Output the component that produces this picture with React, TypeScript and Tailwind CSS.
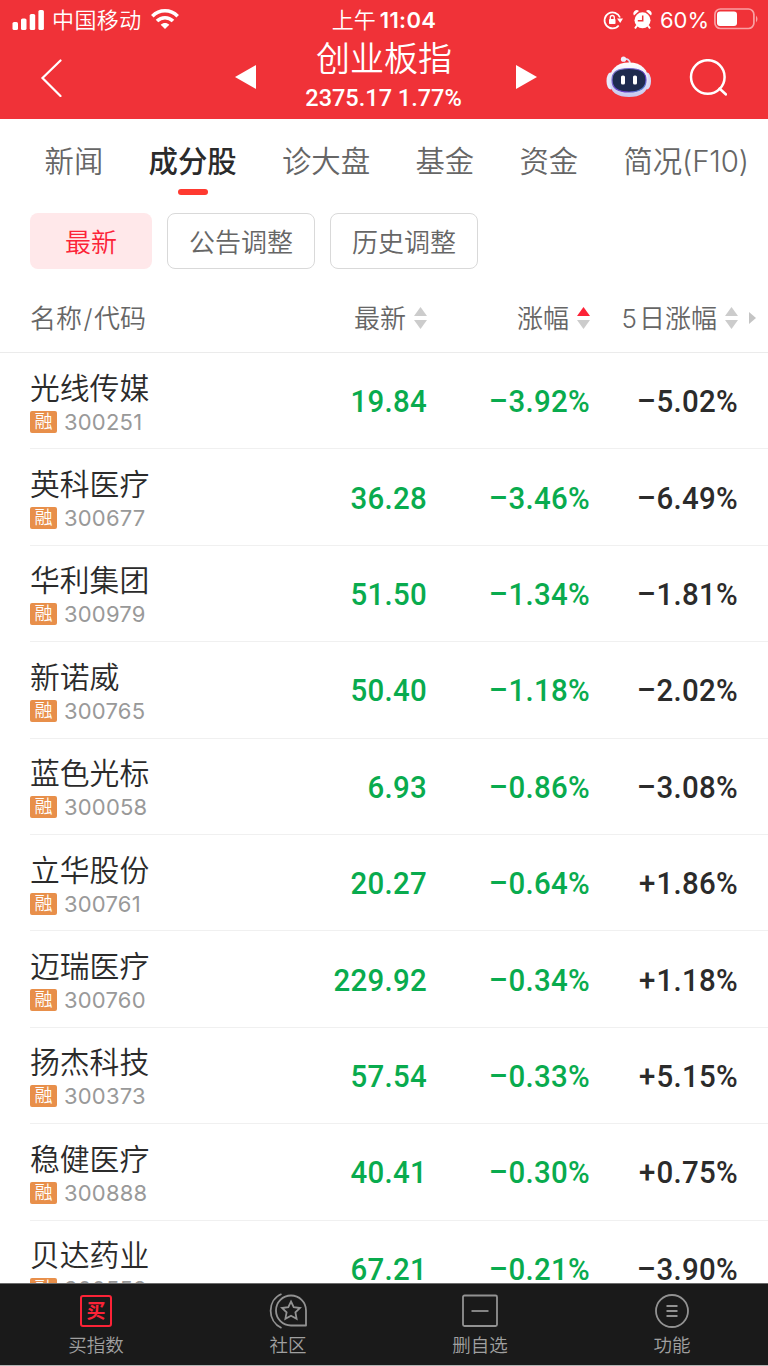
import clsx from "clsx"

const stocks = [
    { name: '光线传媒', code: '300251', price: '19.84', change: '−3.92%', five: '−5.02%' },
    { name: '英科医疗', code: '300677', price: '36.28', change: '−3.46%', five: '−6.49%' },
    { name: '华利集团', code: '300979', price: '51.50', change: '−1.34%', five: '−1.81%' },
    { name: '新诺威', code: '300765', price: '50.40', change: '−1.18%', five: '−2.02%' },
    { name: '蓝色光标', code: '300058', price: '6.93', change: '−0.86%', five: '−3.08%' },
    { name: '立华股份', code: '300761', price: '20.27', change: '−0.64%', five: '+1.86%' },
    { name: '迈瑞医疗', code: '300760', price: '229.92', change: '−0.34%', five: '+1.18%' },
    { name: '扬杰科技', code: '300373', price: '57.54', change: '−0.33%', five: '+5.15%' },
    { name: '稳健医疗', code: '300888', price: '40.41', change: '−0.30%', five: '+0.75%' },
    { name: '贝达药业', code: '300558', price: '67.21', change: '−0.21%', five: '−3.90%' },
]

const tabs = ['新闻', '成分股', '诊大盘', '基金', '资金', '简况(F10)']

function StatusBar() {
    return (
        <div className="grid h-10 grid-cols-3 items-center text-[22px] leading-none">
            <div className="flex items-center pl-3">
                <svg width="32" height="20" viewBox="0 0 32 20" fill="white">
                    <rect x="0.5" y="12" width="5.5" height="8" rx="1.6" />
                    <rect x="9" y="8.500" width="5.500" height="11.500" rx="1.6" />
                    <rect x="17.700" y="4" width="5.500" height="16" rx="1.6" />
                    <rect x="26.400" y="0" width="5.500" height="20" rx="1.6" />
                </svg>
                <span className="ml-2 tracking-[0.4px]">中国移动</span>
                <svg className="-mt-[3px] ml-[9px]" width="28" height="20" viewBox="0 0 28 20" fill="none" stroke="white" strokeWidth="3.600">
                    <path d="M1.300 7.200C8.500 0 19.500 0 26.700 7.200" />
                    <path d="M6 12C10.500 7.600 17.500 7.600 22 12" />
                    <path d="M14 20L9.700 15.700C12.200 13.300 15.800 13.300 18.300 15.700Z" fill="white" stroke="none" />
                </svg>
            </div>
            <div className="text-center">上午<span className="ml-1 font-semibold tracking-[0.3px]">11:04</span></div>
            <div className="flex items-center justify-end pr-2">
                <svg width="20" height="20" viewBox="0 0 20 20" fill="none" stroke="white" strokeWidth="1.700">
                    <path d="M15.700 15.500A8 8 0 1 1 17 7.500" />
                    <path d="M14 8.500H20L17.200 13Z" fill="white" stroke="none" />
                    <rect x="6" y="9" width="6.500" height="5" rx="0.800" fill="white" stroke="none" />
                    <path d="M7.300 9.500V7.500a2 2 0 0 1 4 0V9.500" strokeWidth="1.300" />
                </svg>
                <svg className="ml-[10px]" width="19" height="20" viewBox="0 0 18 20" fill="white">
                    <path d="M0.500 5.500A3.400 3.400 0 0 1 5.500 1ZM12.500 1A3.400 3.400 0 0 1 17.500 5.500Z" />
                    <circle cx="9" cy="10.300" r="8" />
                    <path d="M3.500 15.500L1.500 18.500M14.500 15.500L16.500 18.500" stroke="white" strokeWidth="2" />
                    <path d="M9.200 5.500V10.700H4.300" fill="none" stroke="#f03238" strokeWidth="1.500" />
                </svg>
                <span className="ml-2 font-normal">60%</span>
                <svg className="-mt-0.5 ml-[5px]" width="46" height="22" viewBox="0 0 46 22">
                    <rect x="0.900" y="1" width="39" height="19.500" rx="5.500" fill="none" stroke="#f9a0a3" strokeWidth="1.700" />
                    <rect x="3" y="3.500" width="20" height="14.500" rx="3" fill="white" />
                    <path d="M42 7.500q3 3.500 0 7z" fill="#f9a0a3" />
                </svg>
            </div>
        </div>
    )
}

function Robot() {
    return (
        <svg width="46" height="42" viewBox="0 0 46 42">
            <defs>
                <linearGradient id="shell" x1="0" y1="0" x2="0" y2="1">
                    <stop offset="0" stopColor="#ffffff" />
                    <stop offset="1" stopColor="#c5c8ef" />
                </linearGradient>
                <linearGradient id="rim" x1="0" y1="0" x2="1" y2="1">
                    <stop offset="0" stopColor="#8585d2" />
                    <stop offset="0.700" stopColor="#6137c8" />
                    <stop offset="1" stopColor="#54b9df" />
                </linearGradient>
            </defs>
            <path d="M17 3Q24 2 24 8" fill="none" stroke="#dedff5" strokeWidth="1.800" />
            <circle cx="17.500" cy="3.200" r="2.600" fill="#eeeefc" />
            <ellipse cx="4.500" cy="25" rx="4" ry="8.500" fill="#e9eafb" />
            <ellipse cx="41" cy="25" rx="4" ry="8.500" fill="#d6d8f5" />
            <path d="M23 6.500C36 6.500 42.500 14 42.500 25C42.500 37 34 41 23 41S3.500 37 3.500 25C3.500 14 10 6.500 23 6.500Z" fill="url(#shell)" />
            <path d="M23 12.500C35 12.500 40 16 40 24S35 36 23 36S6 32 6 24S11 12.500 23 12.500Z" fill="#1e2b4e" stroke="url(#rim)" strokeWidth="1.200" />
            <rect x="15" y="19.500" width="4" height="9" rx="1.600" fill="white" />
            <rect x="27" y="19.500" width="4" height="9" rx="1.600" fill="white" />
        </svg>
    )
}

function SortIcon({ active }: { active?: boolean }) {
    return (
        <svg className="shrink-0" width="13" height="22" viewBox="0 0 13 22">
            <path d="M6.500 0L13 9H0Z" fill={active ? '#fc2337' : '#cccccc'} />
            <path d="M0 13H13L6.500 22Z" fill="#cccccc" />
        </svg>
    )
}

function Percent({ value }: { value: string }) {
    return (
        <>
            <span className={clsx('inline-block origin-right', value[0] === '−' ? 'scale-x-[1.2]' : 'mr-px')}>{value[0]}</span>
            {value.slice(1)}
        </>
    )
}

function Header() {
    return (
        <header className="h-[119px] bg-[#f03238] text-white">
            <StatusBar />
            <div className="flex h-[76px] items-center">
                <svg className="ml-10" width="22" height="38" viewBox="0 0 22 38" fill="none" stroke="white" strokeWidth="2.200">
                    <path d="M20.500 1.500L2.500 19L20.500 37" strokeLinecap="round" />
                </svg>
                <svg className="-mt-0.5 ml-[173px]" width="22" height="24" viewBox="0 0 22 24" fill="white"><path d="M0 12L21 0V24Z" /></svg>
                <div className="flex w-[258px] flex-col items-center pr-1">
                    <h1 className="h-[38px] text-[34px] leading-[38px]">创业板指</h1>
                    <div className="mt-0.5 h-9 scale-x-[0.96] font-[Roboto] text-[24.500px] leading-9 font-medium">2375.17 1.77%</div>
                </div>
                <svg className="-mt-0.5" width="22" height="24" viewBox="0 0 22 24" fill="white"><path d="M1 0L22 12L1 24Z" /></svg>
                <div className="-mt-0.5 ml-[69px]"><Robot /></div>
                <svg className="ml-[37px]" width="38" height="38" viewBox="0 0 38 38" fill="none" stroke="white" strokeWidth="2.500">
                    <circle cx="18.800" cy="18" r="16.800" />
                    <path d="M30.500 29.500L37 35.500" strokeLinecap="round" />
                </svg>
            </div>
        </header>
    )
}

function BottomNav() {
    return (
        <nav className="grid h-[83px] shrink-0 grid-cols-4 border-t border-b border-t-[#6b6b6b] border-b-[#b5b5b5] bg-[#1a1a1a] text-[18.500px] text-[#a0a0a0]">
            <div className="flex flex-col items-center pt-2">
                <div className="flex h-[38px] items-center">
                    <div className="flex h-8 w-8 items-center justify-center rounded-[3px] border-2 border-[#fc2337] text-[19px] leading-none font-bold text-[#fc2337]">买</div>
                </div>
                <span className="leading-[30px]">买指数</span>
            </div>
            <div className="flex flex-col items-center pt-2">
                <svg width="38" height="38" viewBox="0 0 38 38" fill="none" stroke="#929292" strokeWidth="1.800">
                    <path d="M12.500 2C-2 8-2 29 12.500 36" />
                    <path d="M37 33.500H22A15 15 0 1 1 37 18.500Z" strokeLinejoin="round" />
                    <path d="M22 9.500L24.700 15.200L31 16L26.400 20.400L27.600 26.700L22 23.700L16.400 26.700L17.600 20.400L13 16L19.300 15.200Z" />
                </svg>
                <span className="leading-[30px]">社区</span>
            </div>
            <div className="flex flex-col items-center pt-2">
                <svg width="38" height="38" viewBox="0 0 38 38" fill="none" stroke="#929292" strokeWidth="1.800">
                    <rect x="2" y="3.500" width="34" height="30.500" rx="1.500" />
                    <path d="M10.500 19H27.500" />
                </svg>
                <span className="leading-[30px]">删自选</span>
            </div>
            <div className="flex flex-col items-center pt-2">
                <svg width="38" height="38" viewBox="0 0 38 38" fill="none" stroke="#929292" strokeWidth="1.800">
                    <circle cx="19" cy="19" r="16" />
                    <path d="M13.500 14H24.500M13.500 19H24.500M13.500 24H24.500" />
                </svg>
                <span className="leading-[30px]">功能</span>
            </div>
        </nav>
    )
}

export default function App() {
    return (
        <div className="flex h-[1366px] w-[768px] flex-col overflow-hidden bg-white font-[Inter,'Noto_Sans_CJK_SC',sans-serif] font-[350] whitespace-nowrap">
            <Header />

            {/* Tabs */}
            <div className="flex h-[76px] shrink-0 justify-between pr-[19px] pl-[44.500px] text-[29.400px] text-[#666]">
                {tabs.map((tab, i) => (
                    <div key={tab} className={clsx('flex flex-col items-center', i === 1 && 'font-medium text-[#2b2b2b]')}>
                        <span className={clsx('h-[70px] leading-[85px]', i === 5 && 'tracking-[-0.1px]')}>{tab}</span>
                        {i === 1 && <i className="h-1.5 w-[30px] rounded-full bg-[#ff3a30]" />}
                    </div>
                ))}
            </div>

            {/* Filters */}
            <div className="mt-[18px] flex h-14 shrink-0 gap-[15px] px-[30px] text-[26px] leading-[56px] text-[#666]">
                <button className="w-[122px] rounded-lg bg-[#ffe8ea] pt-0.5 text-[#fc2337]">最新</button>
                <button className="w-[148px] rounded-lg border border-[#d9d9d9] pt-0.5 leading-[54px]">公告调整</button>
                <button className="w-[148px] rounded-lg border border-[#d9d9d9] pt-0.5 leading-[54px]">历史调整</button>
            </div>

            {/* Table head */}
            <div className="flex h-[84px] shrink-0 items-center border-b border-[#ebebeb] pt-[14px] pl-[30px] text-[26px] leading-[42px] text-[#666]">
                <span className="w-[200px] pt-0.5">名称<span className="px-[1.5px]">/</span>代码</span>
                <div className="flex w-[197px] items-center justify-end gap-2"><span className="pt-0.5">最新</span><SortIcon /></div>
                <div className="flex w-[163px] items-center justify-end gap-2"><span className="pt-0.5">涨幅</span><SortIcon active /></div>
                <div className="flex w-[148px] items-center justify-end gap-2"><span className="pt-0.5"><span className="mr-0.5">5</span>日涨幅</span><SortIcon /></div>
                <svg className="ml-[11px]" width="7" height="12" viewBox="0 0 7 12" fill="#c4c4c4"><path d="M0 0L7 6L0 12Z" /></svg>
            </div>

            <div className="min-h-0 flex-1 overflow-hidden pl-[30px]">
                {stocks.map(s => (
                    <div key={s.code} className="flex h-[96.400px] items-center border-b border-[#f0f0f0]">
                        <div className="w-[200px]">
                            <div className="h-[42px] text-[29.800px] leading-[42px] text-[#2b2b2b]">{s.name}</div>
                            <div className="flex h-[26px] items-center">
                                <span className="flex h-[22px] w-[27px] items-center justify-center rounded-[2px] bg-[#e88f4a] text-[18px] leading-none text-white">融</span>
                                <span className="ml-[7px] text-[22px] leading-none font-normal tracking-[0.200px] text-[#999]">{s.code}</span>
                            </div>
                        </div>
                        <div className="flex pt-px font-[Roboto] text-[32px] font-medium tracking-[0.300px] text-[#09ab4e]">
                            <span className="w-[197px] origin-right scale-x-[0.92] text-right">{s.price}</span>
                            <span className="w-[163px] origin-right scale-x-[0.92] text-right"><Percent value={s.change} /></span>
                            <span className="w-[148px] origin-right scale-x-[0.92] text-right text-[#2b2b2b]"><Percent value={s.five} /></span>
                        </div>
                    </div>
                ))}
            </div>

            <BottomNav />
        </div>
    )
}
